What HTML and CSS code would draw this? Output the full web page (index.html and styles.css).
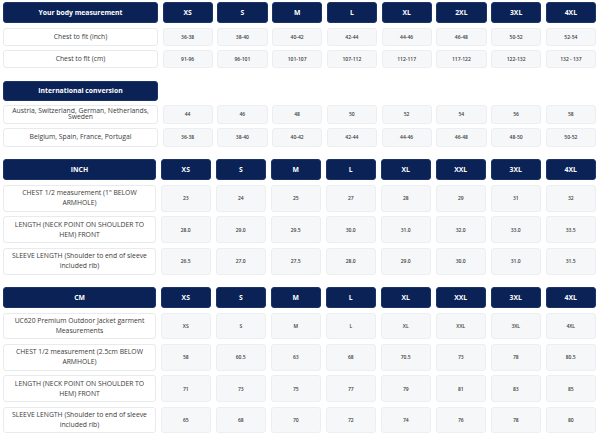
FILE: index.html
```html
<!DOCTYPE html>
<html lang="en">
<head>
<meta charset="utf-8">
<title>Size chart</title>
<link rel="stylesheet" href="styles.css">
</head>
<body>
<div class="chart">
  <div class="tbl s1">
    <div class="hd first">Your body measurement</div>
    <div class="hd">XS</div><div class="hd">S</div><div class="hd">M</div><div class="hd">L</div>
    <div class="hd">XL</div><div class="hd">2XL</div><div class="hd">3XL</div><div class="hd">4XL</div>
    <div class="lbl">Chest to fit (inch)</div>
    <div class="val">36-38</div><div class="val">38-40</div><div class="val">40-42</div><div class="val">42-44</div>
    <div class="val">44-46</div><div class="val">46-48</div><div class="val">50-52</div><div class="val">52-54</div>
    <div class="lbl">Chest to fit (cm)</div>
    <div class="val">91-96</div><div class="val">96-101</div><div class="val">101-107</div><div class="val">107-112</div>
    <div class="val">112-117</div><div class="val">117-122</div><div class="val">122-132</div><div class="val">132 - 137</div>
  </div>

  <div class="tbl s2">
    <div class="hd first">International conversion</div>
    <div class="empty"></div><div class="empty"></div><div class="empty"></div><div class="empty"></div>
    <div class="empty"></div><div class="empty"></div><div class="empty"></div><div class="empty"></div>
    <div class="lbl tight">Austria, Switzerland, German, Netherlands, Sweden</div>
    <div class="val">44</div><div class="val">46</div><div class="val">48</div><div class="val">50</div>
    <div class="val">52</div><div class="val">54</div><div class="val">56</div><div class="val">58</div>
    <div class="lbl">Belgium, Spain, France, Portugal</div>
    <div class="val">36-38</div><div class="val">38-40</div><div class="val">40-42</div><div class="val">42-44</div>
    <div class="val">44-46</div><div class="val">46-48</div><div class="val">48-50</div><div class="val">50-52</div>
  </div>

  <div class="tbl s3">
    <div class="hd first">INCH</div>
    <div class="hd">XS</div><div class="hd">S</div><div class="hd">M</div><div class="hd">L</div>
    <div class="hd">XL</div><div class="hd">XXL</div><div class="hd">3XL</div><div class="hd">4XL</div>
    <div class="lbl">CHEST 1/2 measurement (1" BELOW ARMHOLE)</div>
    <div class="val">23</div><div class="val">24</div><div class="val">25</div><div class="val">27</div>
    <div class="val">28</div><div class="val">29</div><div class="val">31</div><div class="val">32</div>
    <div class="lbl">LENGTH (NECK POINT ON SHOULDER TO HEM) FRONT</div>
    <div class="val">28.0</div><div class="val">29.0</div><div class="val">29.5</div><div class="val">30.0</div>
    <div class="val">31.0</div><div class="val">32.0</div><div class="val">33.0</div><div class="val">33.5</div>
    <div class="lbl">SLEEVE LENGTH (Shoulder to end of sleeve included rib)</div>
    <div class="val">26.5</div><div class="val">27.0</div><div class="val">27.5</div><div class="val">28.0</div>
    <div class="val">29.0</div><div class="val">30.0</div><div class="val">31.0</div><div class="val">31.5</div>
  </div>

  <div class="tbl s4">
    <div class="hd first">CM</div>
    <div class="hd">XS</div><div class="hd">S</div><div class="hd">M</div><div class="hd">L</div>
    <div class="hd">XL</div><div class="hd">XXL</div><div class="hd">3XL</div><div class="hd">4XL</div>
    <div class="lbl">UC620 Premium Outdoor Jacket garment Measurements</div>
    <div class="val">XS</div><div class="val">S</div><div class="val">M</div><div class="val">L</div>
    <div class="val">XL</div><div class="val">XXL</div><div class="val">3XL</div><div class="val">4XL</div>
    <div class="lbl">CHEST 1/2 measurement (2.5cm BELOW ARMHOLE)</div>
    <div class="val">58</div><div class="val">60.5</div><div class="val">63</div><div class="val">68</div>
    <div class="val">70.5</div><div class="val">73</div><div class="val">78</div><div class="val">80.5</div>
    <div class="lbl">LENGTH (NECK POINT ON SHOULDER TO HEM) FRONT</div>
    <div class="val">71</div><div class="val">73</div><div class="val">75</div><div class="val">77</div>
    <div class="val">79</div><div class="val">81</div><div class="val">83</div><div class="val">85</div>
    <div class="lbl">SLEEVE LENGTH (Shoulder to end of sleeve included rib)</div>
    <div class="val">65</div><div class="val">68</div><div class="val">70</div><div class="val">72</div>
    <div class="val">74</div><div class="val">76</div><div class="val">78</div><div class="val">80</div>
  </div>
</div>
</body>
</html>
```

FILE: styles.css
```css
* { box-sizing: border-box; }
html, body { margin: 0; padding: 0; background: #ffffff; }
body {
  font-family: "Open Sans", "Noto Sans", Arial, sans-serif;
  color: #333;
}
.chart {
  padding: 2px 4px 0 3px;
  display: flex;
  flex-direction: column;
  gap: 12.5px;
}
.tbl {
  display: grid;
  grid-template-columns: 155fr repeat(8, 50.25fr);
  column-gap: 4.5px;
  row-gap: 4.5px;
}
.s1 { grid-template-rows: 21px 18px 18px; }
.s2 { grid-template-rows: 20px 19px 19px; row-gap: 4px; }
.s3 { grid-template-columns: 153fr repeat(8, 50.5fr); grid-template-rows: 21px 27px 27px 27px; }
.s4 { grid-template-columns: 153fr repeat(8, 50.5fr); grid-template-rows: 21px 26.5px 27px 27px 26.5px; }

.hd {
  background: #0b2256;
  color: #fff;
  border-radius: 3px;
  border: 1px solid #1c3366;
  font-weight: 700;
  font-size: 6.8px;
  display: flex;
  align-items: center;
  justify-content: center;
  text-align: center;
}
.lbl {
  background: #fff;
  border: 1px solid #e9eaec;
  border-radius: 3px;
  font-size: 6.8px;
  font-weight: 500;
  line-height: 10px;
  color: #3a3a3a;
  display: flex;
  align-items: center;
  justify-content: center;
  text-align: center;
  padding: 0 4px;
}
.lbl.tight { line-height: 6.5px; padding: 0 3px; }
.val {
  background: #f6f7f9;
  border: 1px solid #eceef1;
  border-radius: 3px;
  font-size: 5px;
  font-weight: 600;
  color: #3c3c3c;
  display: flex;
  align-items: center;
  justify-content: center;
  text-align: center;
}
.empty { background: transparent; }
```
